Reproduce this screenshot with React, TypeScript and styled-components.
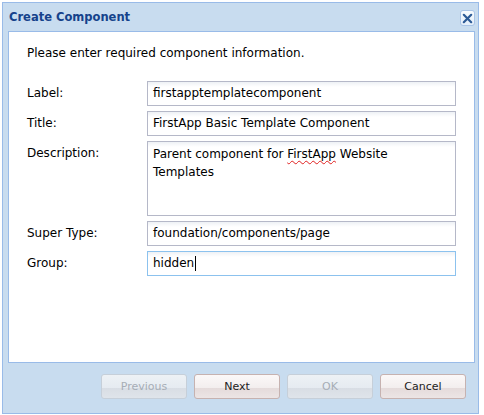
import styled, { createGlobalStyle } from "styled-components";

const GlobalStyle = createGlobalStyle`
  html, body {
    margin: 0;
    padding: 0;
    background: #ffffff;
  }
  body {
    font-family: "DejaVu Sans", Verdana, sans-serif;
    font-size: 12px;
    color: #000;
  }
`;

type Field = {
  label: string;
  value: string;
  multiline?: boolean;
  focused?: boolean;
};

const fields: Field[] = [
  { label: "Label:", value: "firstapptemplatecomponent" },
  { label: "Title:", value: "FirstApp Basic Template Component" },
  { label: "Description:", value: "", multiline: true },
  { label: "Super Type:", value: "foundation/components/page" },
  { label: "Group:", value: "hidden", focused: true },
];

const buttons = [
  { text: "Previous", disabled: true },
  { text: "Next", disabled: false },
  { text: "OK", disabled: true },
  { text: "Cancel", disabled: false },
];

export default function App() {
  return (
    <>
      <GlobalStyle />
      <Window>
        <Header>
          <WindowTitle>Create Component</WindowTitle>
          <CloseButton aria-label="Close">
            <svg width="11" height="11" viewBox="0 0 11 11">
              <path
                d="M1.8 1.8 L9.2 9.2 M9.2 1.8 L1.8 9.2"
                stroke="#2c5a96"
                strokeWidth="2.2"
                strokeLinecap="round"
              />
            </svg>
          </CloseButton>
        </Header>
        <Body>
          <Intro>Please enter required component information.</Intro>
          <Form>
            {fields.map((f) => (
              <Row key={f.label}>
                <Label>{f.label}</Label>
                {f.multiline ? (
                  <TextArea>
                    Parent component for <Misspelled>FirstApp</Misspelled>{" "}
                    Website Templates
                  </TextArea>
                ) : (
                  <TextBox $focused={f.focused}>
                    {f.value}
                    {f.focused && <Caret />}
                  </TextBox>
                )}
              </Row>
            ))}
          </Form>
        </Body>
        <Footer>
          {buttons.map((b) => (
            <Button key={b.text} disabled={b.disabled}>
              {b.text}
            </Button>
          ))}
        </Footer>
      </Window>
    </>
  );
}

const Window = styled.div`
  box-sizing: border-box;
  margin: 2px 0 0 2px;
  width: 477px;
  height: 412px;
  border: 1px solid #99bbe8;
  background: #c8dcef;
  padding: 0 3px 0 5px;
  display: flex;
  flex-direction: column;
`;

const Header = styled.div`
  height: 28px;
  display: flex;
  align-items: center;
  justify-content: space-between;
`;

const WindowTitle = styled.div`
  font-size: 11.5px;
  font-weight: bold;
  color: #15428b;
  padding-left: 1px;
`;

const CloseButton = styled.button`
  box-sizing: border-box;
  width: 15px;
  height: 16px;
  margin-top: 2px;
  padding: 0;
  border: 1px solid #a9c4e6;
  border-radius: 3px;
  background: linear-gradient(#f8fbfe, #e3eefa);
  display: flex;
  align-items: center;
  justify-content: center;
`;

const Body = styled.div`
  box-sizing: border-box;
  height: 332px;
  background: #ffffff;
  border: 1px solid #99bbe8;
  padding: 13px 17px 0 18px;
`;

const Intro = styled.div`
  line-height: 16px;
`;

const Form = styled.div`
  margin-top: 20px;
  display: flex;
  flex-direction: column;
  gap: 5px;
`;

const Row = styled.div`
  display: flex;
  align-items: flex-start;
`;

const Label = styled.div`
  width: 120px;
  line-height: 25px;
  flex-shrink: 0;
`;

const TextBox = styled.div<{ $focused?: boolean }>`
  box-sizing: border-box;
  width: 309px;
  height: 25px;
  line-height: 23px;
  padding: 0 5px;
  border: 1px solid ${(p) => (p.$focused ? "#8cc2ee" : "#b5b8c8")};
  background: linear-gradient(#eef1f5 0, #ffffff 5px);
  white-space: nowrap;
  display: flex;
  align-items: center;
`;

const TextArea = styled.div`
  box-sizing: border-box;
  width: 309px;
  height: 75px;
  padding: 3px 5px;
  line-height: 18px;
  border: 1px solid #b5b8c8;
  background: linear-gradient(#eef1f5 0, #ffffff 5px);
`;

const Misspelled = styled.span`
  text-decoration: underline wavy #e02020;
  text-decoration-thickness: 1px;
  text-underline-offset: 2px;
`;

const Caret = styled.span`
  display: inline-block;
  width: 1px;
  height: 15px;
  background: #000;
  margin-left: 1px;
`;

const Footer = styled.div`
  flex: 1;
  display: flex;
  justify-content: flex-end;
  align-items: flex-start;
  gap: 7px;
  padding: 11px 9px 0 0;
`;

const Button = styled.button`
  box-sizing: border-box;
  width: 86px;
  height: 25px;
  padding: 0;
  border-radius: 3px;
  font-family: "DejaVu Sans", Verdana, sans-serif;
  font-size: 11px;
  border: 1px solid #c6b2b0;
  color: #222;
  background: linear-gradient(#fbf8f8 0, #f3eeee 55%, #e4dada 55%, #ece5e5 100%);

  &:disabled {
    border-color: #c6cfd9;
    color: #a6adb6;
    background: linear-gradient(#edf1f5 0, #e6ebf1 55%, #d8dde4 55%, #dfe4ea 100%);
  }
`;
